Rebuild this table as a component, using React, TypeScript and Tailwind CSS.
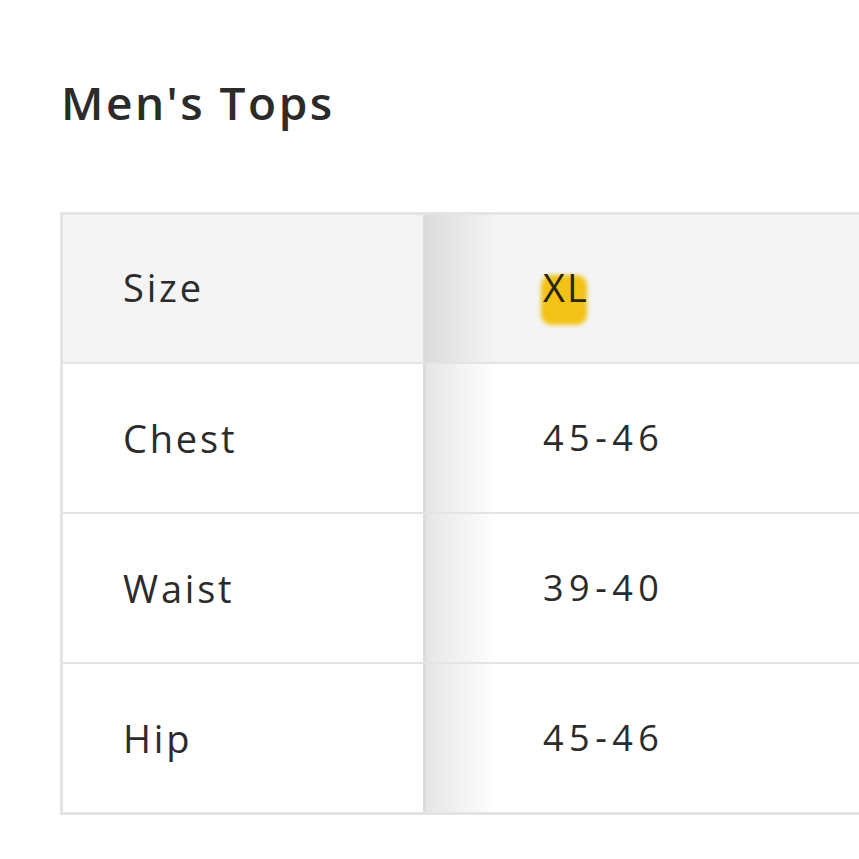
import React from "react";

const rows = [
  { label: "Chest", value: "45-46" },
  { label: "Waist", value: "39-40" },
  { label: "Hip", value: "45-46" },
];

export default function App() {
  return (
    <div
      className="w-[859px] h-[859px] bg-white overflow-hidden text-[#2b2b2b]"
      style={{ fontFamily: "'Open Sans', Lato, sans-serif" }}
    >
      <h1 className="pl-[61px] pt-[74px] text-[46px] font-semibold leading-[56px] tracking-[2.5px]">
        Men's Tops
      </h1>
      <div className="ml-[60px] mt-[82px] border-t-[3px] border-l-[3px] border-b-[3px] border-[#e4e4e4]">
        <div className="flex h-[149px] bg-[#f4f4f4] border-b-[2px] border-[#e4e4e4]">
          <div className="w-[363px] shrink-0 flex items-center pl-[60px] pb-[2px] text-[38px] tracking-[2.8px] border-r-[3px] border-[#dcdcdc]">
            Size
          </div>
          <div className="relative flex-1 flex items-center pl-[117px] pb-[4px] text-[38px] tracking-[2px]">
            <div className="absolute left-0 top-0 bottom-0 w-[70px] bg-gradient-to-r from-[#dcdcdc] to-[#f4f4f4]" />
            <span className="relative leading-none">
              <span className="absolute left-[-2px] top-[7px] w-[46px] h-[50px] rounded-[10px] bg-[#f2c217] blur-[2px]" />
              <span className="relative text-[#2a2410]">XL</span>
            </span>
          </div>
        </div>
        {rows.map((r, i) => (
          <div
            key={r.label}
            className={
              i < rows.length - 1
                ? "flex h-[150px] border-b-[2px] border-[#e4e4e4]"
                : "flex h-[148px]"
            }
          >
            <div className="w-[363px] shrink-0 flex items-center pl-[60px] text-[38px] tracking-[2.8px] border-r-[3px] border-[#dcdcdc]">
              {r.label}
            </div>
            <div className="relative flex-1 flex items-center pl-[117px] text-[36px] font-normal tracking-[5.5px]">
              <div className="absolute left-0 top-0 bottom-0 w-[70px] bg-gradient-to-r from-[#e6e6e6] to-white" />
              <span className="relative">{r.value}</span>
            </div>
          </div>
        ))}
      </div>
    </div>
  );
}
